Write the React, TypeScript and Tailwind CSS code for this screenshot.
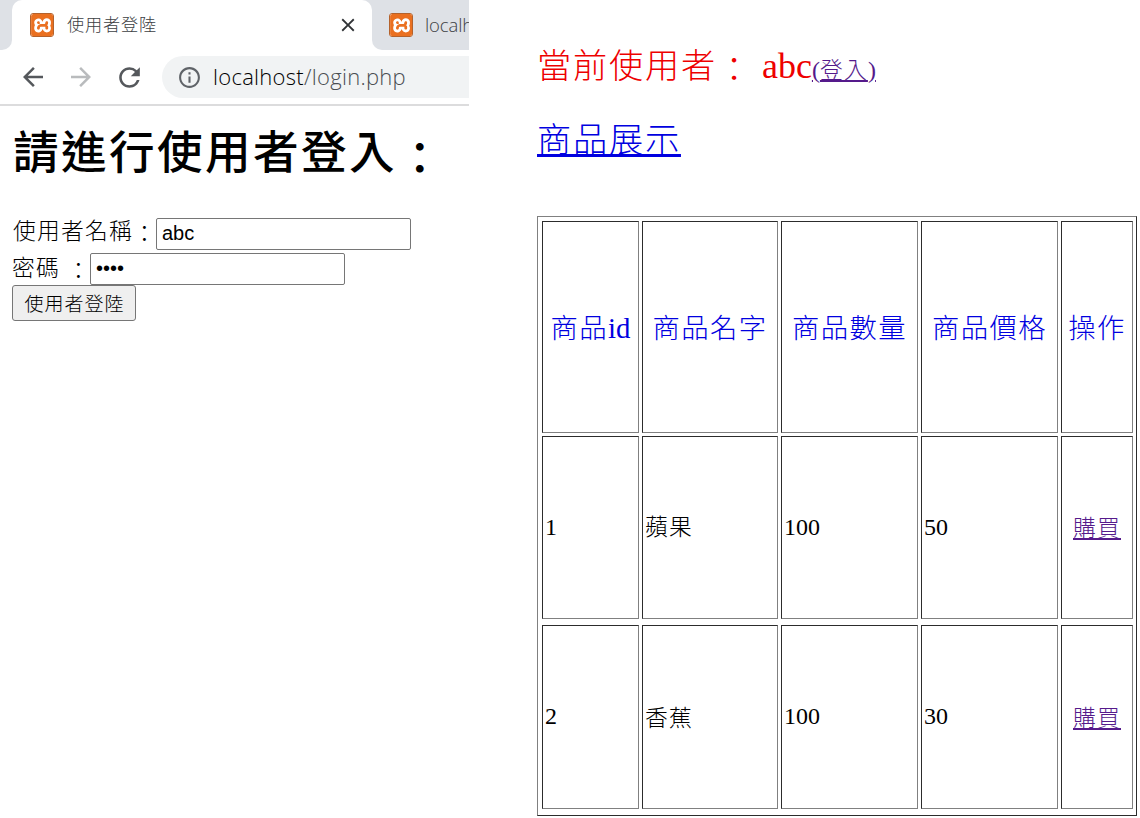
import type { ReactNode } from "react";
import { MdArrowBack, MdArrowForward, MdClose, MdInfoOutline, MdRefresh } from "react-icons/md";
import { SiXampp } from "react-icons/si";

const products = [
  { id: 1, name: "蘋果", stock: 100, price: 50, row: "h-[183px]", nudge: "pt-px" },
  { id: 2, name: "香蕉", stock: 100, price: 30, row: "mt-[6px] h-[184px]", nudge: "pt-[3px]" },
];

const columns = [
  { cjk: "商品", latin: "id", width: "w-[97px]" },
  { cjk: "商品名字", latin: "", width: "w-[136px]" },
  { cjk: "商品數量", latin: "", width: "w-[137px]" },
  { cjk: "商品價格", latin: "", width: "w-[137px]" },
  { cjk: "操作", latin: "", width: "w-[72px]" },
];

/* Chinese text set slightly smaller than its em, with the full em advance kept. */
function Han({ children }: { children: ReactNode }) {
  return <span className="text-[0.95em] tracking-[0.0526em]">{children}</span>;
}

function Colon() {
  return <span className="inline-block translate-y-[0.13em]">：</span>;
}

function Favicon() {
  return (
    <span className="flex size-6 shrink-0 items-center justify-center overflow-hidden rounded-[3px] border border-[#b4622c] bg-white">
      <SiXampp className="size-[23px] shrink-0 text-[#ea7020]" />
    </span>
  );
}

function BrowserChrome() {
  return (
    <header className="h-[106px] w-full border-b-2 border-[#dcdcdd] font-['Open_Sans','Noto_Sans_CJK_TC',sans-serif]">
      <div className="flex h-[50px] bg-[#dee1e6]">
        <div className="w-3 shrink-0 bg-white">
          <div className="h-full rounded-br-[10px] bg-[#dee1e6]" />
        </div>
        <div className="flex w-[360px] shrink-0 items-center rounded-t-[10px] bg-white pl-[18px] pr-[13px]">
          <Favicon />
          <span className="ml-[13px] text-[17.2px] font-light leading-6 tracking-[0.8px] text-[#3c4043]">使用者登陸</span>
          <MdClose className="ml-auto size-[22px] text-[#303336]" />
        </div>
        <div className="min-w-0 flex-1 bg-white">
          <div className="flex h-full items-center overflow-hidden rounded-bl-[10px] bg-[#dee1e6] pl-[17px]">
            <Favicon />
            <span className="ml-3 text-[18.5px] font-light leading-6 tracking-[-0.1px] text-[#3c4043]">localh</span>
          </div>
        </div>
      </div>
      <div className="flex h-[54px] items-center pl-[18px]">
        <MdArrowBack className="size-[30px] shrink-0 text-[#55585c]" />
        <MdArrowForward className="ml-[18px] size-[30px] shrink-0 text-[#b9bbbd]" />
        <MdRefresh className="ml-[18px] size-[31px] shrink-0 text-[#55585c]" />
        <div className="ml-[17px] flex h-[42px] flex-1 items-center rounded-l-full bg-[#f1f3f4] pl-[15px]">
          <MdInfoOutline className="size-[25px] shrink-0 text-[#5f6368]" />
          <span className="-mt-[2px] ml-[11px] text-[22px] font-light leading-7 tracking-[0.28px] text-[#4a4e52]">
            <span className="text-black">localhost</span>/login.php
          </span>
        </div>
      </div>
    </header>
  );
}

function LoginForm() {
  const input =
    "h-8 w-[255px] rounded-[2px] border border-[#767676] bg-white pb-[2px] pl-[5px] font-['Liberation_Sans',sans-serif] text-[20px] font-normal text-black outline-none";
  return (
    <main className="pl-[13px] font-light text-black">
      <h1 className="mt-[23px] h-12 whitespace-nowrap text-[48px] font-medium leading-[48px]">
        <Han>請進行使用者登入<Colon /></Han>
      </h1>
      <form className="-ml-px mt-[41px] flex flex-col items-start text-[24px] leading-8">
        <label className="flex h-8">
          <span className="-mt-[3px] w-36 shrink-0 whitespace-nowrap pl-px"><Han>使用者名稱<Colon /></Han></span>
          <input className={input} defaultValue="abc" />
        </label>
        <label className="mt-[3px] flex h-8">
          <span className="-mt-px w-[78px] shrink-0 whitespace-pre"><Han>密碼 <Colon /></Han></span>
          <input className={input} type="password" defaultValue="1234" />
        </label>
        <button
          type="button"
          className="h-9 w-[124px] rounded-[3px] border border-[#767676] bg-[#efefef] pl-px pt-[3px] text-[20px] font-light leading-[30px]"
        >
          <Han>使用者登陸</Han>
        </button>
      </form>
    </main>
  );
}

function Cell({ width, className = "", children }: { width: string; className?: string; children: ReactNode }) {
  return (
    <div
      role="cell"
      className={`flex shrink-0 items-center whitespace-nowrap border border-b-[#808080] border-l-[#2c2c2c] border-r-[#808080] border-t-[#2c2c2c] ${width} ${className}`}
    >
      {children}
    </div>
  );
}

function ProductTable() {
  return (
    <div
      role="table"
      className="mt-[52px] h-[600px] w-[600px] border border-b-[#2c2c2c] border-l-[#808080] border-r-[#2c2c2c] border-t-[#808080] p-1 text-[24px] leading-8 text-black"
    >
      <div role="row" className="flex h-[212px] gap-[3px] text-[28.8px] text-[#0000e0]">
        {columns.map((c) => (
          <Cell key={c.cjk} width={c.width} className="justify-center pt-[2px]">
            <span><Han>{c.cjk}</Han>{c.latin}</span>
          </Cell>
        ))}
      </div>
      <div className="mt-[3px]">
        {products.map((p) => (
          <div role="row" key={p.id} className={`flex gap-[3px] ${p.row}`}>
            <Cell width="w-[97px]" className="pb-[2px] pl-[2px]">{p.id}</Cell>
            <Cell width="w-[136px]" className={`pl-[2px] ${p.nudge}`}><Han>{p.name}</Han></Cell>
            <Cell width="w-[137px]" className="pb-[2px] pl-[2px]">{p.stock}</Cell>
            <Cell width="w-[137px]" className="pb-[2px] pl-[2px]">{p.price}</Cell>
            <Cell width="w-[72px]" className={`justify-center ${p.nudge}`}>
              <a href="#buy" className="text-[#551a8b] underline"><Han>購買</Han></a>
            </Cell>
          </div>
        ))}
      </div>
    </div>
  );
}

export default function App() {
  return (
    <div className="flex h-[818px] w-[1140px] overflow-hidden bg-white font-['Liberation_Serif','Noto_Sans_CJK_TC',serif]">
      <section className="w-[469px] shrink-0 overflow-hidden">
        <BrowserChrome />
        <LoginForm />
      </section>
      <section className="ml-[68px] w-[600px] shrink-0 font-light">
        <p className="mt-[42px] h-12 whitespace-nowrap text-[36px] leading-[48px] text-[#ee0000]">
          <Han>當前使用者<Colon /></Han> abc
          <a href="#login" className="text-[24px] text-[#551a8b] underline">(<Han>登入</Han>)</a>
        </p>
        <h2 className="mt-[26px] h-12 text-[36px] leading-[48px]">
          <a href="#products" className="text-[#0000e0] underline decoration-[3px]"><Han>商品展示</Han></a>
        </h2>
        <ProductTable />
      </section>
    </div>
  );
}
